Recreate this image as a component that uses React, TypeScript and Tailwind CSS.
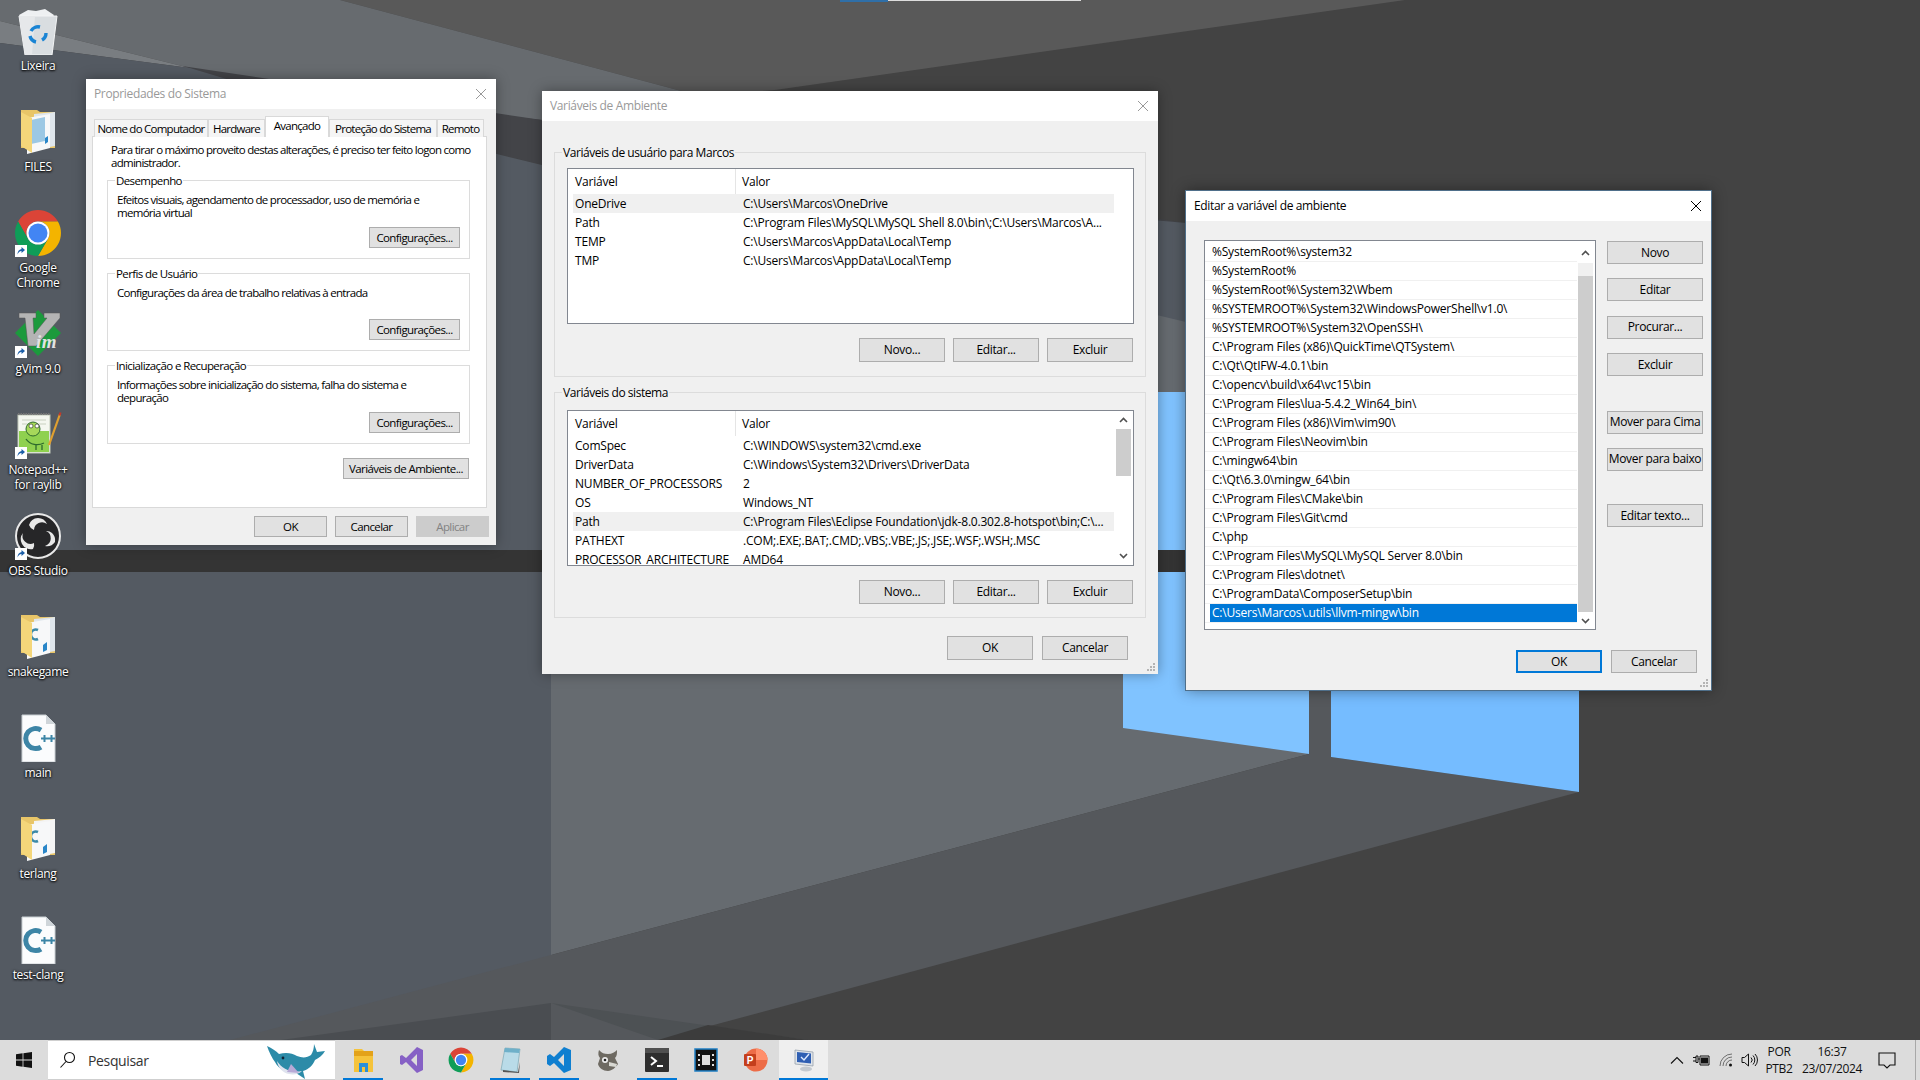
import React from 'react';

// ---------- small shared pieces ----------

const Btn = ({ children, className = '' }: { children: React.ReactNode; className?: string }) => (
  <div className={`flex items-center justify-center bg-[#e1e1e1] border border-[#adadad] text-black shrink-0 whitespace-nowrap ${className}`}>
    {children}
  </div>
);

const CloseX = ({ color }: { color: string }) => (
  <svg width="12" height="12" viewBox="0 0 12 12" fill="none" stroke={color} strokeWidth="1">
    <path d="M1 1l10 10M11 1L1 11" />
  </svg>
);

const Grip = () => (
  <svg className="absolute right-[2px] bottom-[2px]" width="10" height="10" viewBox="0 0 10 10" fill="#b4b4b4">
    <rect x="7" y="1" width="2" height="2" />
    <rect x="4" y="4" width="2" height="2" />
    <rect x="7" y="4" width="2" height="2" />
    <rect x="1" y="7" width="2" height="2" />
    <rect x="4" y="7" width="2" height="2" />
    <rect x="7" y="7" width="2" height="2" />
  </svg>
);

const Chevron = ({ up }: { up?: boolean }) => (
  <svg width="9" height="6" viewBox="0 0 9 6" fill="none" stroke="#505050" strokeWidth="1.6">
    <path d={up ? 'M1 5l3.5-3.5L8 5' : 'M1 1l3.5 3.5L8 1'} />
  </svg>
);

const Group = ({ label, className, children }: { label: string; className: string; children: React.ReactNode }) => (
  <div className={`relative border border-[#dcdcdc] ${className}`}>
    <span className="absolute -top-[8px] left-[7px] px-[1px] leading-[15px] bg-inherit whitespace-nowrap">{label}</span>
    {children}
  </div>
);

// ---------- wallpaper ----------

const Wallpaper = () => (
  <svg className="absolute inset-0" width="1920" height="1080" viewBox="0 0 1920 1080">
    <rect width="1920" height="1080" fill="#434343" />
    <polygon points="340,0 1405,0 775,90 700,96" fill="#595959" />
    <polygon points="0,0 340,0 700,96 542,120 497,115 250,78 190,68 0,21" fill="#676b6f" />
    <polygon points="0,21 190,68 0,43" fill="#797d81" />
    <polygon points="182,66 542,120 1186,223 1186,300 542,165 497,154 250,86" fill="#434448" />
    <polygon points="0,43 190,68 250,86 497,154 542,165 1186,223 1186,700 551,955 551,1003 281,1040 0,1040" fill="#545a62" />
    <polygon points="551,170 1186,322 1186,700 1309,754 551,955" fill="#666b70" />
    <polygon points="1309,391 1331,391 1331,757 1579,792 658,1040 230,1040 551,955 1309,754" fill="#55585c" />
    <polygon points="281,1040 551,1003 551,1040" fill="#4a4d51" />
    <polygon points="551,1003 808,1040 658,1040" fill="#4d5154" />
    <polygon points="658,1040 708,1025 808,1040" fill="#3c3c3c" />
    <polygon points="1123,392 1309,392 1309,754 1123,728" fill="#80c3ff" />
    <polygon points="1331,392 1579,392 1579,792 1331,757" fill="#75bcff" />
    <rect x="0" y="550" width="1186" height="22" fill="#343434" />
  </svg>
);

// ---------- desktop icons ----------

const ShortcutBadge = () => (
  <g>
    <rect x="1" y="36" width="12" height="12" fill="#fff" />
    <path d="M3.500 45.500c0-3 1.500-5 4-5.500V38l3.500 3-3.500 3v-2c-2 .2-3 1-4 3.500z" fill="#1c5fa8" />
  </g>
);

const RecycleIcon = () => (
  <svg width="48" height="48" viewBox="0 0 48 48">
    <path d="M5 8l9-5 8 1 9-2 9 6-2 3H7z" fill="#eef0f2" />
    <path d="M5 9h38l-5 39H11z" fill="#d9dde0" stroke="#f3f4f5" />
    <path d="M5 9h16l-3 39h-7z" fill="#e6e8ea" />
    <g fill="none" stroke="#1a84d4" strokeWidth="3.400">
      <path d="M17 24a8 8 0 0 1 9-4" />
      <path d="M32 26a8 8 0 0 1-4 7" />
      <path d="M22 35a8 8 0 0 1-6-6" />
    </g>
  </svg>
);

const FolderIcon = ({ kind }: { kind: 'docs' | 'cpp' | 'two' }) => (
  <svg width="48" height="48" viewBox="0 0 48 48">
    <path d="M7 2h16l3 2h15v36H7z" fill="#e8c568" />
    <polygon points="20,6 41,4 41,38 20,42" fill={kind === 'two' ? '#f4f4f4' : '#dfe6ec'} />
    <polygon points="13,10 36,6 36,40 13,46" fill="#f7f8f9" />
    {kind === 'docs' && <polygon points="17,12 31,9 31,33 17,36" fill="#9cc8e4" />}
    {kind === 'docs' && <polygon points="31,30 34,28 34,34 31,36" fill="#2a86c8" />}
    {kind !== 'docs' && <path d="M24 17a5 5 0 1 0 0 9" fill="none" stroke="#3d8aa8" strokeWidth="2.600" />}
    {kind !== 'docs' && <polygon points="29,32 33,29 33,37 29,39" fill="#2a86c8" />}
    <polygon points="7,4 18,10 18,45 7,38" fill="#f4d67a" />
  </svg>
);

const ChromeIcon = ({ size = 48, badge }: { size?: number; badge?: boolean }) => (
  <svg width={size} height={size} viewBox="0 0 48 48">
    <path d="M4.100 12.500A23 23 0 0 1 43.900 12.500L24 12.500A11.500 11.500 0 0 0 14 29.750z" fill="#db4437" />
    <path d="M43.900 12.500A23 23 0 0 1 24 47L34 29.750A11.500 11.500 0 0 0 24 12.500z" fill="#f4b400" />
    <path d="M24 47A23 23 0 0 1 4.100 12.500L14 29.750A11.500 11.500 0 0 0 34 29.750z" fill="#0f9d58" />
    <circle cx="24" cy="24" r="11.500" fill="#fff" />
    <circle cx="24" cy="24" r="9.500" fill="#4285f4" />
    {badge && <ShortcutBadge />}
  </svg>
);

const VimIcon = () => (
  <svg width="48" height="48" viewBox="0 0 48 48">
    <polygon points="24,0 47,23 24,46 1,23" fill="#1b9a3c" />
    <polygon points="5,3 22,3 22,8 19,8 20,24 33,8 30,8 30,3 46,3 46,8 22,36 14,36 11,8 5,8" fill="#b4b4b4" stroke="#555" strokeWidth=".5" />
    <text x="22" y="38" fontSize="19" fontWeight="700" fontStyle="italic" fontFamily="'Liberation Serif',serif" letterSpacing="0.500" fill="#e2e2e2">im</text>
    <ShortcutBadge />
  </svg>
);

const NotepadIcon = () => (
  <svg width="48" height="48" viewBox="0 0 48 48">
    <rect x="4" y="4" width="32" height="38" fill="#f4f7f0" stroke="#c0c8b8" />
    <path d="M4 3h32" stroke="#777" strokeWidth="2" strokeDasharray="1.500 1" />
    <path d="M8 9h24M8 13h24" stroke="#c8d0c0" />
    <rect x="5" y="20" width="30" height="21" fill="#8fd14f" />
    <circle cx="19" cy="18" r="7" fill="#a6d85a" stroke="#2d6a2d" />
    <circle cx="17" cy="15" r="2" fill="#fff" stroke="#222" strokeWidth=".6" />
    <circle cx="23" cy="15" r="2" fill="#fff" stroke="#222" strokeWidth=".6" />
    <path d="M12 28c4 6 12 7 18 4M22 34v5M28 34v5" fill="none" stroke="#2d6a2d" strokeWidth="1.300" />
    <path d="M35 34L46 3" stroke="#e0a030" strokeWidth="2.200" />
    <path d="M45.500 4.500L46.500 1.500" stroke="#c0392b" strokeWidth="2.200" />
    <ShortcutBadge />
  </svg>
);

const ObsIcon = () => (
  <svg width="48" height="48" viewBox="0 0 48 48">
    <circle cx="24" cy="24" r="22" fill="#262628" stroke="#e8e8e8" strokeWidth="2" />
    <path d="M24 6a10 10 0 0 1 9 6 8 8 0 0 0-13 6 8 8 0 0 1-5-5 10 10 0 0 1 9-7z" fill="#e8e8e8" />
    <path d="M41 30a10 10 0 0 1-10 4 8 8 0 0 0 1-15 8 8 0 0 1 6 2 10 10 0 0 1 3 9z" fill="#e8e8e8" />
    <path d="M8 32a10 10 0 0 1 1-11 8 8 0 0 0 11 10 8 8 0 0 1-1 6 10 10 0 0 1-11-5z" fill="#e8e8e8" />
    <ShortcutBadge />
  </svg>
);

const CppFileIcon = () => (
  <svg width="48" height="48" viewBox="0 0 48 48">
    <path d="M8 1h24l9 9v38H8z" fill="#fbfcfd" stroke="#c8ced2" />
    <path d="M32 1v9h9z" fill="#cfd5d9" />
    <path d="M27 16a10 10 0 1 0 0 17" fill="none" stroke="#3d85a6" strokeWidth="5" />
    <path d="M27 24.500h7M30.500 21v7M34 24.500h7M37.500 21v7" stroke="#3d85a6" strokeWidth="2" />
  </svg>
);

const desktopItems: { label: string; lines?: string[]; icon: React.ReactNode }[] = [
  { label: 'Lixeira', icon: <RecycleIcon /> },
  { label: 'FILES', icon: <FolderIcon kind="docs" /> },
  { label: 'Google Chrome', lines: ['Google', 'Chrome'], icon: <ChromeIcon badge /> },
  { label: 'gVim 9.0', icon: <VimIcon /> },
  { label: 'Notepad++ for raylib', lines: ['Notepad++', 'for raylib'], icon: <NotepadIcon /> },
  { label: 'OBS Studio', icon: <ObsIcon /> },
  { label: 'snakegame', icon: <FolderIcon kind="cpp" /> },
  { label: 'main', icon: <CppFileIcon /> },
  { label: 'terlang', icon: <FolderIcon kind="two" /> },
  { label: 'test-clang', icon: <CppFileIcon /> },
];

const DesktopIcons = () => (
  <div className="absolute left-0 top-[4px] w-[76px] flex flex-col">
    {desktopItems.map((item) => (
      <div key={item.label} className="h-[101px] flex flex-col items-center">
        <div className="h-[54px] flex items-center justify-center">{item.icon}</div>
        <div className="text-white text-[12px] leading-[15px] text-center whitespace-nowrap [text-shadow:0_1px_2px_#000,0_0_3px_#000]">
          {(item.lines ?? [item.label]).map((l) => (
            <div key={l}>{l}</div>
          ))}
        </div>
      </div>
    ))}
  </div>
);

// ---------- dialog 1: Propriedades do Sistema ----------

const tabs = [
  { label: 'Nome do Computador', w: 'w-[114px]' },
  { label: 'Hardware', w: 'w-[57px]' },
  { label: 'Avançado', w: 'w-[64px]', active: true },
  { label: 'Proteção do Sistema', w: 'w-[108px]' },
  { label: 'Remoto', w: 'w-[47px]' },
];

const SettingsGroup = ({ label, text, className }: { label: string; text: React.ReactNode; className: string }) => (
  <Group label={label} className={`bg-white w-[363px] flex flex-col pt-[12px] pb-[10px] pl-[9px] pr-[9px] ${className}`}>
    <div className="leading-[13px] flex-1 tracking-[-0.7px]">{text}</div>
    <Btn className="w-[91px] h-[21px] self-end">Configurações...</Btn>
  </Group>
);

const SystemProps = () => (
  <div className="absolute left-[86px] top-[79px] w-[410px] h-[466px] flex flex-col text-[12px] shadow-[0_0_12px_rgba(0,0,0,0.35)]">
    <div className="h-[30px] bg-white flex items-center justify-between pl-[8px] pr-[9px] text-[#999999]">
      <span>Propriedades do Sistema</span>
      <CloseX color="#999999" />
    </div>
    <div className="flex-1 bg-[#f0f0f0] flex flex-col pt-[7px] text-[11.5px] tracking-[-0.6px]">
      <div className="h-[21px] pl-[8px] flex items-end relative z-10 tracking-[-0.75px]">
        {tabs.map((t) =>
          t.active ? (
            <div key={t.label} className={`${t.w} h-[21px] bg-white border border-b-0 border-[#d9d9d9] flex items-center justify-center pb-[2px]`}>
              {t.label}
            </div>
          ) : (
            <div key={t.label} className={`${t.w} h-[18px] bg-[#f5f5f5] border border-b-0 border-[#d9d9d9] flex items-center justify-center whitespace-nowrap`}>
              {t.label}
            </div>
          ),
        )}
      </div>
      <div className="ml-[6px] w-[395px] h-[372px] -mt-[1px] bg-white border border-[#d9d9d9] pl-[14px] pt-[6px] flex flex-col">
        <div className="pl-[4px] leading-[13px] whitespace-nowrap tracking-[-0.73px]">
          Para tirar o máximo proveito destas alterações, é preciso ter feito logon como<br />administrador.
        </div>
        <SettingsGroup
          className="h-[79px] mt-[11px]"
          label="Desempenho"
          text={<>Efeitos visuais, agendamento de processador, uso de memória e<br />memória virtual</>}
        />
        <SettingsGroup
          className="h-[78px] mt-[14px]"
          label="Perfis de Usuário"
          text="Configurações da área de trabalho relativas à entrada"
        />
        <SettingsGroup
          className="h-[79px] mt-[14px]"
          label="Inicialização e Recuperação"
          text={<>Informações sobre inicialização do sistema, falha do sistema e<br />depuração</>}
        />
        <Btn className="w-[126px] h-[21px] mt-[14px] ml-[236px]">Variáveis de Ambiente...</Btn>
      </div>
      <div className="flex justify-end gap-[8px] pr-[7px] mt-[8px]">
        <Btn className="w-[73px] h-[21px]">OK</Btn>
        <Btn className="w-[73px] h-[21px]">Cancelar</Btn>
        <Btn className="w-[73px] h-[21px] !bg-[#cccccc] !border-[#cccccc] !text-[#838383]">Aplicar</Btn>
      </div>
    </div>
  </div>
);

// ---------- dialog 2: Variáveis de Ambiente ----------

const userVars = [
  ['OneDrive', 'C:\\Users\\Marcos\\OneDrive'],
  ['Path', 'C:\\Program Files\\MySQL\\MySQL Shell 8.0\\bin\\;C:\\Users\\Marcos\\A...'],
  ['TEMP', 'C:\\Users\\Marcos\\AppData\\Local\\Temp'],
  ['TMP', 'C:\\Users\\Marcos\\AppData\\Local\\Temp'],
];

const systemVars = [
  ['ComSpec', 'C:\\WINDOWS\\system32\\cmd.exe'],
  ['DriverData', 'C:\\Windows\\System32\\Drivers\\DriverData'],
  ['NUMBER_OF_PROCESSORS', '2'],
  ['OS', 'Windows_NT'],
  ['Path', 'C:\\Program Files\\Eclipse Foundation\\jdk-8.0.302.8-hotspot\\bin;C:\\...'],
  ['PATHEXT', '.COM;.EXE;.BAT;.CMD;.VBS;.VBE;.JS;.JSE;.WSF;.WSH;.MSC'],
  ['PROCESSOR_ARCHITECTURE', 'AMD64'],
];

const VarList = ({ rows, hot, scroll }: { rows: string[][]; hot: string; scroll?: boolean }) => (
  <div className="w-[567px] h-[156px] bg-white border border-[#828790] flex overflow-hidden tracking-[-0.2px]">
    <div className="flex-1 pl-[5px]">
      <div className="w-[541px] h-[25px] flex items-center">
        <div className="w-[163px] h-full flex items-center pl-[2px] border-r border-[#e5e5e5]">Variável</div>
        <div className="pl-[6px]">Valor</div>
      </div>
      {rows.map(([k, v]) => (
        <div key={k} className={`w-[541px] h-[19px] flex items-center whitespace-nowrap ${k === hot ? 'bg-[#f0f0f0]' : ''}`}>
          <div className="w-[168px] pl-[2px]">{k}</div>
          <div className="pl-[2px]">{v}</div>
        </div>
      ))}
    </div>
    {scroll && (
      <div className="w-[15px] mr-[2px] flex flex-col items-center">
        <div className="h-[18px] flex items-center justify-center"><Chevron up /></div>
        <div className="w-[15px] h-[47px] bg-[#cdcdcd]" />
        <div className="flex-1" />
        <div className="h-[18px] flex items-center justify-center"><Chevron /></div>
      </div>
    )}
  </div>
);

const VarGroup = ({ label, rows, hot, scroll, className }: { label: string; rows: string[][]; hot: string; scroll?: boolean; className: string }) => (
  <Group label={label} className={`bg-[#f0f0f0] w-[592px] pl-[12px] tracking-[-0.45px] ${className}`}>
    <VarList rows={rows} hot={hot} scroll={scroll} />
    <div className="w-[566px] flex justify-end gap-[8px] mt-[14px] tracking-[-0.35px]">
      <Btn className="w-[86px] h-[24px]">Novo...</Btn>
      <Btn className="w-[86px] h-[24px]">Editar...</Btn>
      <Btn className="w-[86px] h-[24px]">Excluir</Btn>
    </div>
  </Group>
);

const EnvVars = () => (
  <div className="absolute left-[542px] top-[91px] w-[616px] h-[583px] flex flex-col text-[12px] shadow-[0_0_12px_rgba(0,0,0,0.35)]">
    <div className="h-[30px] bg-white flex items-center justify-between pl-[8px] pr-[9px] text-[#999999]">
      <span>Variáveis de Ambiente</span>
      <CloseX color="#999999" />
    </div>
    <div className="relative flex-1 bg-[#f0f0f0] pt-[31px] pl-[12px] flex flex-col">
      <VarGroup className="h-[225px] pt-[15px]" label="Variáveis de usuário para Marcos" rows={userVars} hot="OneDrive" />
      <VarGroup className="h-[226px] pt-[17px] mt-[15px]" label="Variáveis do sistema" rows={systemVars} hot="Path" scroll />
      <div className="w-[574px] flex justify-end gap-[9px] mt-[18px]">
        <Btn className="w-[86px] h-[24px]">OK</Btn>
        <Btn className="w-[86px] h-[24px]">Cancelar</Btn>
      </div>
      <Grip />
    </div>
  </div>
);

// ---------- dialog 3: Editar a variável de ambiente ----------

const pathEntries = [
  '%SystemRoot%\\system32',
  '%SystemRoot%',
  '%SystemRoot%\\System32\\Wbem',
  '%SYSTEMROOT%\\System32\\WindowsPowerShell\\v1.0\\',
  '%SYSTEMROOT%\\System32\\OpenSSH\\',
  'C:\\Program Files (x86)\\QuickTime\\QTSystem\\',
  'C:\\Qt\\QtIFW-4.0.1\\bin',
  'C:\\opencv\\build\\x64\\vc15\\bin',
  'C:\\Program Files\\lua-5.4.2_Win64_bin\\',
  'C:\\Program Files (x86)\\Vim\\vim90\\',
  'C:\\Program Files\\Neovim\\bin',
  'C:\\mingw64\\bin',
  'C:\\Qt\\6.3.0\\mingw_64\\bin',
  'C:\\Program Files\\CMake\\bin',
  'C:\\Program Files\\Git\\cmd',
  'C:\\php',
  'C:\\Program Files\\MySQL\\MySQL Server 8.0\\bin',
  'C:\\Program Files\\dotnet\\',
  'C:\\ProgramData\\ComposerSetup\\bin',
  'C:\\Users\\Marcos\\.utils\\llvm-mingw\\bin',
];

const EditVar = () => (
  <div className="absolute left-[1186px] top-[191px] w-[525px] h-[499px] flex flex-col text-[12px] shadow-[0_0_0_1px_#4f6f8a,0_0_14px_rgba(0,0,0,0.45)]">
    <div className="h-[30px] bg-white flex items-center justify-between pl-[8px] pr-[9px] text-black">
      <span>Editar a variável de ambiente</span>
      <CloseX color="#000000" />
    </div>
    <div className="relative flex-1 bg-[#f0f0f0] pt-[19px] pl-[18px] flex flex-col">
      <div className="flex">
        <div className="w-[392px] h-[390px] bg-white border border-[#828790] flex pt-[2px] tracking-[-0.2px]">
          <div className="w-[372px] flex flex-col">
            {pathEntries.map((p, i) => (
              <div key={p} className="h-[19px] pl-[5px] border-b border-[#f0f0f0] flex whitespace-nowrap">
                <div className={`flex-1 pl-[2px] flex items-center ${i === pathEntries.length - 1 ? 'bg-[#0078d7] text-white' : ''}`}>{p}</div>
              </div>
            ))}
          </div>
          <div className="w-[15px] ml-[1px] -mt-[1px] flex flex-col">
            <div className="h-[21px] flex items-center justify-center"><Chevron up /></div>
            <div className="h-[13px] bg-[#f0f0f0]" />
            <div className="h-[336px] bg-[#cdcdcd]" />
            <div className="flex-1 flex items-center justify-center"><Chevron /></div>
          </div>
        </div>
        <div className="ml-[11px] pt-[1px] flex flex-col gap-[14.400px]">
          <Btn className="w-[96px] h-[23px]">Novo</Btn>
          <Btn className="w-[96px] h-[23px]">Editar</Btn>
          <Btn className="w-[96px] h-[23px]">Procurar...</Btn>
          <Btn className="w-[96px] h-[23px]">Excluir</Btn>
          <Btn className="w-[96px] h-[23px] mt-[20px]">Mover para Cima</Btn>
          <Btn className="w-[96px] h-[23px]">Mover para baixo</Btn>
          <Btn className="w-[96px] h-[23px] mt-[19px]">Editar texto...</Btn>
        </div>
      </div>
      <div className="w-[493px] flex justify-end gap-[9px] mt-[20px]">
        <Btn className="w-[86px] h-[23px] !border-2 !border-[#0078d7]">OK</Btn>
        <Btn className="w-[86px] h-[23px]">Cancelar</Btn>
      </div>
      <Grip />
    </div>
  </div>
);

// ---------- taskbar ----------

const WinLogo = () => (
  <svg width="16" height="16" viewBox="0 0 16 16" fill="#111">
    <path d="M0 2.200l6.600-.9v6.300H0zM7.400 1.200L16 0v7.600H7.400zM0 8.400h6.600v6.300L0 13.800zM7.400 8.400H16V16l-8.600-1.200z" />
  </svg>
);

// drawn from the tail-up whale on the search box
const Whale = () => (
  <svg width="60" height="40" viewBox="0 0 60 40">
    <path d="M1 6c5 2 9 5 12 8 7-2 13-1 18 2 5 2 10 2 14-1 2-3 3-7 3-11l3 8 8-1c-2 4-6 7-10 9-2 5-6 9-12 11l2 8-9-6c-9 0-17-3-21-11C6 18 3 12 1 6z" fill="#2c8ba8" />
    <path d="M11 21c5 8 14 12 25 10-3 3-8 4-13 3-6-1-11-6-12-13z" fill="#dfe3ee" />
    <path d="M25 24l8 9-12-1z" fill="#b7a9d6" />
    <circle cx="17" cy="18" r="1.400" fill="#123" />
  </svg>
);

const taskIcons: { key: string; icon: React.ReactNode; active?: boolean; current?: boolean }[] = [
  {
    key: 'explorer',
    active: true,
    icon: (
      <svg width="24" height="28" viewBox="0 0 24 28">
        <path d="M3 3h8l2 2h9v21H3z" fill="#f5c33b" />
        <rect x="3" y="5" width="19" height="5" fill="#e3a21a" />
        <path d="M8 26v-9h9v9h-3v-5h-3v5z" fill="#2a8fd8" />
      </svg>
    ),
  },
  {
    key: 'vs',
    icon: (
      <svg width="24" height="28" viewBox="0 0 24 28">
        <path d="M17 1l6 3v20l-6 3-11-11-4 3-2-1V10l2-1 4 3zM17 8l-6 6 6 6z" fill="#8661c5" />
      </svg>
    ),
  },
  { key: 'chrome', icon: <ChromeIcon size={26} /> },
  {
    key: 'notepad',
    active: true,
    icon: (
      <svg width="24" height="28" viewBox="0 0 24 28">
        <path d="M7 2l15 1-3 23-16-2z" fill="#b9dbe8" stroke="#7da7b5" strokeWidth=".7" />
        <path d="M7 2l15 1-1 4-15-1z" fill="#6fb0c9" />
        <path d="M5 24l15 2 2-10-1 11-16-1z" fill="#555" />
      </svg>
    ),
  },
  {
    key: 'vscode',
    active: true,
    icon: (
      <svg width="24" height="28" viewBox="0 0 24 28">
        <path d="M17 1l7 3v20l-7 3-10-10-4 3-3-2V10l3-2 4 3zM17 8l-6 6 6 6z" fill="#0f7fd0" />
      </svg>
    ),
  },
  {
    key: 'gimp',
    icon: (
      <svg width="26" height="26" viewBox="0 0 26 26">
        <path d="M4 3c3 3 5 4 9 4s7-2 9-4c0 4 0 6-2 8l3 6c-2 3-6 7-10 7-5 0-9-3-10-7l2-6C3 9 3 6 4 3z" fill="#6e6a62" />
        <circle cx="10" cy="13" r="3" fill="#eee" />
        <circle cx="10" cy="13" r="1.300" fill="#222" />
        <path d="M14 15l8 2-1 3-7-1z" fill="#d8d8d2" />
      </svg>
    ),
  },
  {
    key: 'terminal',
    active: true,
    icon: (
      <svg width="24" height="24" viewBox="0 0 24 24">
        <rect width="24" height="24" rx="1" fill="#2e2e2e" />
        <rect width="24" height="5" fill="#505050" />
        <path d="M6 9l5 4-5 4" fill="none" stroke="#fff" strokeWidth="2" />
        <rect x="12" y="17" width="6" height="2" fill="#fff" />
      </svg>
    ),
  },
  {
    key: 'video',
    icon: (
      <svg width="24" height="24" viewBox="0 0 24 24">
        <rect x="1" y="1" width="22" height="22" fill="#111" stroke="#1f7fc4" strokeWidth="1.500" />
        <rect x="8" y="7" width="8" height="10" fill="#ddd" />
        <path d="M4 6h2v2H4zM4 11h2v2H4zM4 16h2v2H4zM18 6h2v2h-2zM18 11h2v2h-2zM18 16h2v2h-2z" fill="#ddd" />
      </svg>
    ),
  },
  {
    key: 'ppt',
    icon: (
      <svg width="26" height="26" viewBox="0 0 26 26">
        <circle cx="14" cy="13" r="11.500" fill="#ed6c47" />
        <path d="M14 1.500A11.500 11.500 0 0 1 25.500 13H14z" fill="#ff8f6b" />
        <rect x="2" y="7" width="12" height="12" rx="1" fill="#c43e1c" />
        <text x="8" y="17" textAnchor="middle" fontSize="10" fontWeight="700" fill="#fff" fontFamily="'Liberation Sans',sans-serif">P</text>
      </svg>
    ),
  },
  {
    key: 'sysprops',
    active: true,
    current: true,
    icon: (
      <svg width="26" height="26" viewBox="0 0 26 26">
        <path d="M4 3l18 2v14L4 17z" fill="#dfe4ea" stroke="#8d98a5" strokeWidth=".7" />
        <path d="M6 5l14 1.500v10L6 15z" fill="#2f5fb3" />
        <path d="M10 10l3 3 5-6" stroke="#dfeaff" fill="none" strokeWidth="1.400" />
        <ellipse cx="15" cy="22" rx="6" ry="2.500" fill="#c4cad0" />
      </svg>
    ),
  },
];

const TrayIcons = () => (
  <>
    <div className="w-[24px] flex justify-center">
      <svg width="14" height="8" viewBox="0 0 14 8" fill="none" stroke="#111" strokeWidth="1.100"><path d="M1 7.500l6-6 6 6" /></svg>
    </div>
    <div className="w-[24px] flex justify-center">
      <svg width="17" height="12" viewBox="0 0 17 12" fill="none" stroke="#111">
        <path d="M0 3.500h3M0 7h3M3 2h2v6.500H3zM5 5h2v6h9V2H7v3" />
        <rect x="8" y="3.500" width="7" height="6" fill="#111" stroke="none" />
      </svg>
    </div>
    <div className="w-[25px] flex justify-center">
      <svg width="14" height="14" viewBox="0 0 14 14" fill="none" stroke="#333" strokeWidth="1">
        <path d="M1 13A12 12 0 0 1 13 1M4 13a9 9 0 0 1 9-9M7 13a6 6 0 0 1 6-6" opacity=".65" />
        <circle cx="11.500" cy="12" r="1.500" fill="#111" stroke="none" />
      </svg>
    </div>
    <div className="w-[23px] flex justify-center">
      <svg width="17" height="14" viewBox="0 0 17 14" fill="none" stroke="#111" strokeWidth="1">
        <path d="M1 4.500h2.500L7.500 1v12l-4-3.500H1zM10 4.500a3.500 3.500 0 0 1 0 5M12 2.500a6.500 6.500 0 0 1 0 9M14 1a8.500 8.500 0 0 1 0 12" />
      </svg>
    </div>
  </>
);

const Taskbar = () => (
  <div className="h-[40px] w-full bg-[#dcdcdc] flex items-stretch text-[#111] relative">
    <div className="w-[48px] flex items-center justify-center"><WinLogo /></div>
    <div className="w-[287px] bg-white border-y border-[#cfcfcf] flex items-center">
      <svg className="ml-[11px]" width="18" height="18" viewBox="0 0 18 18" fill="none" stroke="#111" strokeWidth="1.100">
        <circle cx="10.500" cy="6.500" r="5" />
        <path d="M7 10.500L1.500 16.500" />
      </svg>
      <span className="ml-[11px] text-[14px] text-[#333]">Pesquisar</span>
      <div className="ml-auto mr-[9px]"><Whale /></div>
    </div>
    <div className="ml-[3px] flex">
      {taskIcons.map((t) => (
        <div key={t.key} className={`relative w-[49px] flex items-center justify-center ${t.current ? 'bg-[#efefef]' : ''}`}>
          {t.icon}
          {t.active && <div className={`absolute bottom-0 h-[2px] bg-[#0078d7] ${t.current ? 'left-0 right-0' : 'left-[5px] right-[4px]'}`} />}
        </div>
      ))}
    </div>
    <div className="ml-auto flex items-center text-[12px]">
      <TrayIcons />
      <div className="w-[36px] text-center leading-[17px]"><div>POR</div><div>PTB2</div></div>
      <div className="w-[70px] text-center leading-[17px]"><div>16:37</div><div>23/07/2024</div></div>
      <div className="w-[40px] flex justify-center">
        <svg width="18" height="17" viewBox="0 0 18 17" fill="none" stroke="#111" strokeWidth="1.100">
          <path d="M1 1h16v12h-5l-3 3-3-3H1z" />
        </svg>
      </div>
      <div className="w-[13px] h-full pl-[8px]"><div className="h-full border-l border-[#a8a8a8]" /></div>
    </div>
  </div>
);

// ---------- page ----------

export default function App() {
  return (
    <div className="w-[1920px] h-[1080px] overflow-hidden flex flex-col font-['Open_Sans',sans-serif] tracking-[-0.35px]">
      <div className="relative flex-1">
        <Wallpaper />
        <div className="absolute left-[840px] top-0 w-[48px] h-[2px] bg-[#2f6fa8]" />
        <div className="absolute left-[888px] top-0 w-[193px] h-[1px] bg-[#dddddd]" />
        <DesktopIcons />
        <SystemProps />
        <EnvVars />
        <EditVar />
      </div>
      <Taskbar />
    </div>
  );
}
